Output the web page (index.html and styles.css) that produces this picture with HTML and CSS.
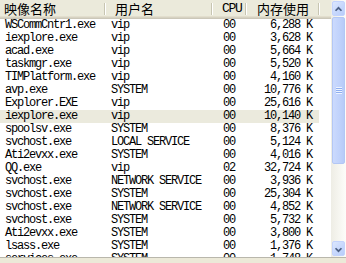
FILE: index.html
```html
<!DOCTYPE html>
<html>
<head>
<meta charset="utf-8">
<link rel="stylesheet" href="styles.css">
</head>
<body>
<div class="list">
  <div class="main">
    <div class="header">
      <div class="hcell h-name">映像名称</div>
      <div class="hcell h-user">用户名</div>
      <div class="hcell h-cpu">CPU</div>
      <div class="hcell h-mem">内存使用</div>
      <div class="hfill"></div>
    </div>
    <div class="rows">
      <div class="row"><span class="c-name">WSCommCntr1.exe</span><span class="c-user">vip</span><span class="c-cpu">00</span><span class="c-mem">6,288 K</span></div>
      <div class="row"><span class="c-name">iexplore.exe</span><span class="c-user">vip</span><span class="c-cpu">00</span><span class="c-mem">3,628 K</span></div>
      <div class="row"><span class="c-name">acad.exe</span><span class="c-user">vip</span><span class="c-cpu">00</span><span class="c-mem">5,664 K</span></div>
      <div class="row"><span class="c-name">taskmgr.exe</span><span class="c-user">vip</span><span class="c-cpu">00</span><span class="c-mem">5,520 K</span></div>
      <div class="row"><span class="c-name">TIMPlatform.exe</span><span class="c-user">vip</span><span class="c-cpu">00</span><span class="c-mem">4,160 K</span></div>
      <div class="row"><span class="c-name">avp.exe</span><span class="c-user">SYSTEM</span><span class="c-cpu">00</span><span class="c-mem">10,776 K</span></div>
      <div class="row"><span class="c-name">Explorer.EXE</span><span class="c-user">vip</span><span class="c-cpu">00</span><span class="c-mem">25,616 K</span></div>
      <div class="row selected"><span class="c-name">iexplore.exe</span><span class="c-user">vip</span><span class="c-cpu">00</span><span class="c-mem">10,140 K</span></div>
      <div class="row"><span class="c-name">spoolsv.exe</span><span class="c-user">SYSTEM</span><span class="c-cpu">00</span><span class="c-mem">8,376 K</span></div>
      <div class="row"><span class="c-name">svchost.exe</span><span class="c-user">LOCAL SERVICE</span><span class="c-cpu">00</span><span class="c-mem">5,124 K</span></div>
      <div class="row"><span class="c-name">Ati2evxx.exe</span><span class="c-user">SYSTEM</span><span class="c-cpu">00</span><span class="c-mem">4,016 K</span></div>
      <div class="row"><span class="c-name">QQ.exe</span><span class="c-user">vip</span><span class="c-cpu">02</span><span class="c-mem">32,724 K</span></div>
      <div class="row"><span class="c-name">svchost.exe</span><span class="c-user">NETWORK SERVICE</span><span class="c-cpu">00</span><span class="c-mem">3,936 K</span></div>
      <div class="row"><span class="c-name">svchost.exe</span><span class="c-user">SYSTEM</span><span class="c-cpu">00</span><span class="c-mem">25,304 K</span></div>
      <div class="row"><span class="c-name">svchost.exe</span><span class="c-user">NETWORK SERVICE</span><span class="c-cpu">00</span><span class="c-mem">4,852 K</span></div>
      <div class="row"><span class="c-name">svchost.exe</span><span class="c-user">SYSTEM</span><span class="c-cpu">00</span><span class="c-mem">5,732 K</span></div>
      <div class="row"><span class="c-name">Ati2evxx.exe</span><span class="c-user">SYSTEM</span><span class="c-cpu">00</span><span class="c-mem">3,800 K</span></div>
      <div class="row"><span class="c-name">lsass.exe</span><span class="c-user">SYSTEM</span><span class="c-cpu">00</span><span class="c-mem">1,376 K</span></div>
      <div class="row"><span class="c-name">services.exe</span><span class="c-user">SYSTEM</span><span class="c-cpu">00</span><span class="c-mem">1,748 K</span></div>
    </div>
  </div>
  <div class="vscroll">
    <div class="sbtn">
      <svg width="13" height="15" viewBox="0 0 13 15"><polyline points="3,9 6.5,5.5 10,9" fill="none" stroke="#4d6185" stroke-width="2"/></svg>
    </div>
    <div class="track">
      <div class="thumb">
        <div class="grip"></div>
      </div>
    </div>
    <div class="sbtn">
      <svg width="13" height="15" viewBox="0 0 13 15"><polyline points="3,6 6.5,9.5 10,6" fill="none" stroke="#4d6185" stroke-width="2"/></svg>
    </div>
  </div>
</div>
<div class="footer"></div>
</body>
</html>
```

FILE: styles.css
```css
html, body {
  margin: 0;
  padding: 0;
  background: #ece9d8;
}

body {
  width: 346px;
  height: 263px;
  overflow: hidden;
}

.list {
  display: flex;
  height: 257px;
  background: #ffffff;
  border-bottom: 1px solid #b9b7ac;
  overflow: hidden;
}

.main {
  flex: 1;
  min-width: 0;
  display: flex;
  flex-direction: column;
  overflow: hidden;
}

.header {
  display: flex;
  height: 19px;
  flex: none;
  background: #ebeadb;
  box-shadow: inset 0 -1px 0 #cbc7b8, inset 0 -2px 0 #d6d2c2, inset 0 -3px 0 #e2decd;
  font-family: "Noto Sans CJK SC", "Liberation Sans", sans-serif;
  font-size: 13px;
  line-height: 17px;
  color: #000;
}

.hcell {
  position: relative;
  box-sizing: border-box;
  white-space: nowrap;
}

.hcell::after {
  content: "";
  position: absolute;
  right: 0;
  top: 3px;
  width: 1px;
  height: 12px;
  background: #c7c5b2;
  box-shadow: 1px 0 0 #ffffff;
}

.h-name { width: 105px; padding-left: 4px; }
.h-user { width: 107px; padding-left: 10px; }
.h-cpu {
  width: 34px;
  padding-left: 10px;
  font-family: "Liberation Mono", monospace;
  font-size: 13px;
  letter-spacing: -1.3px;
  line-height: 18px;
}
.h-mem { width: 73px; text-align: right; padding-right: 10px; }
.hfill { flex: 1; }

.rows {
  display: flex;
  flex-direction: column;
  font-family: "Liberation Mono", "DejaVu Sans Mono", monospace;
  font-size: 12px;
  letter-spacing: -1.2px;
  color: #000;
}

.row {
  display: flex;
  height: 13px;
  line-height: 13px;
  flex: none;
  width: 319px;
  white-space: nowrap;
}

.row.selected {
  background: #ebeadd;
}

.c-name { width: 105px; padding-left: 5px; box-sizing: border-box; }
.c-user { width: 107px; padding-left: 6px; box-sizing: border-box; }
.c-cpu { width: 34px; padding-left: 11px; box-sizing: border-box; }
.c-mem { width: 73px; padding-right: 7px; text-align: right; box-sizing: border-box; }

.vscroll {
  width: 15px;
  flex: none;
  display: flex;
  flex-direction: column;
  background: linear-gradient(to right, #eeede5, #fdfdfa);
}

.sbtn {
  width: 13px;
  height: 15px;
  margin: 1px 1px 1px 1px;
  box-sizing: border-box;
  border: 1px solid #c3d3fd;
  border-radius: 2px;
  background: linear-gradient(135deg, #dce7fe 0%, #c5d6fc 60%, #b8cdfa 100%);
  display: flex;
}

.track {
  flex: 1;
  display: flex;
  flex-direction: column;
}

.thumb {
  height: 147px;
  margin: 0 1px;
  box-sizing: border-box;
  border: 1px solid #b3c7f5;
  border-radius: 2px;
  background: linear-gradient(to right, #cbdafd, #c0d2fb 60%, #b7cbf8);
  display: flex;
  align-items: center;
  justify-content: center;
}

.grip {
  width: 6px;
  height: 7px;
  background: repeating-linear-gradient(to bottom, #eef4fe 0, #eef4fe 1px, #8eaef0 1px, #8eaef0 2px);
}

.footer {
  height: 5px;
  background: #ece9d8;
}
```
